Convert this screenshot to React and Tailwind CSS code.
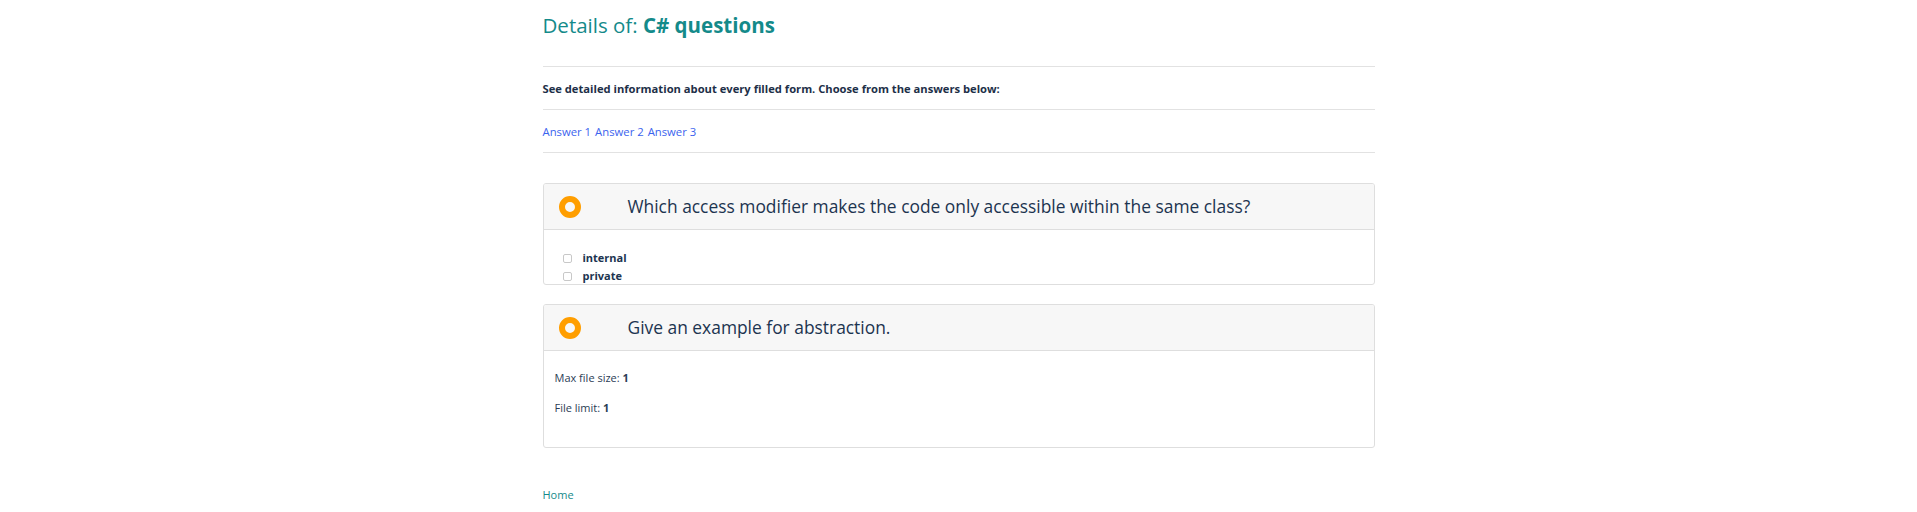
export default function App() {
  const font = { fontFamily: '"Open Sans", "Noto Sans", sans-serif' };
  return (
    <div className="min-h-screen bg-white" style={font}>
      <div className="mx-auto w-[832px]">
        <div className="h-[67px] border-b border-[#e2e2e2] pt-[12px]">
          <h2 className="text-[20.5px] leading-[26px] text-[#148a8a]">
            Details of: <span className="font-bold">C# questions</span>
          </h2>
        </div>

        <div className="flex h-[43px] items-center border-b border-[#e2e2e2] pt-[2px]">
          <p className="text-[11.2px] font-bold text-[#1d2f48]">
            See detailed information about every filled form. Choose from the answers below:
          </p>
        </div>

        <div className="flex h-[43px] items-center gap-[4px] border-b border-[#e2e2e2] pt-[3px] text-[11.3px] text-[#3b63ee]">
          <a href="#">Answer 1</a>
          <a href="#">Answer 2</a>
          <a href="#">Answer 3</a>
        </div>

        <div className="mt-[30px] overflow-hidden rounded-[3px] border border-[#dedede]">
          <div className="flex h-[46px] items-center border-b border-[#dedede] bg-[#f7f7f7]">
            <div className="ml-[15px] h-[22px] w-[22px] rounded-full border-[6px] border-[#ff9e00]" />
            <span className="ml-[47px] text-[17.4px] text-[#1c3450]">
              Which access modifier makes the code only accessible within the same class?
            </span>
          </div>
          <div className="h-[54px] pt-[19px] pl-[19px]">
            {["internal", "private"].map((a) => (
              <label key={a} className="flex h-[18px] items-center">
                <span className="h-[9px] w-[9px] rounded-[2px] border border-[#c8c8c8] bg-white" />
                <span className="ml-[11px] text-[11px] font-bold text-[#1c3450]">{a}</span>
              </label>
            ))}
          </div>
        </div>

        <div className="mt-[19px] overflow-hidden rounded-[3px] border border-[#dedede]">
          <div className="flex h-[46px] items-center border-b border-[#dedede] bg-[#f7f7f7]">
            <div className="ml-[15px] h-[22px] w-[22px] rounded-full border-[6px] border-[#ff9e00]" />
            <span className="ml-[47px] text-[17.4px] text-[#1c3450]">Give an example for abstraction.</span>
          </div>
          <div className="h-[96px] pt-[18px] pl-[11px] text-[11px] text-[#2b3d55]">
            <p className="h-[18px] leading-[18px]">
              Max file size: <span className="font-bold">1</span>
            </p>
            <p className="mt-[12px] h-[18px] leading-[18px]">
              File limit: <span className="font-bold">1</span>
            </p>
          </div>
        </div>

        <div className="mt-[38px] text-[11px] leading-[18px] text-[#148a8a]">
          <a href="#">Home</a>
        </div>
      </div>
    </div>
  );
}
